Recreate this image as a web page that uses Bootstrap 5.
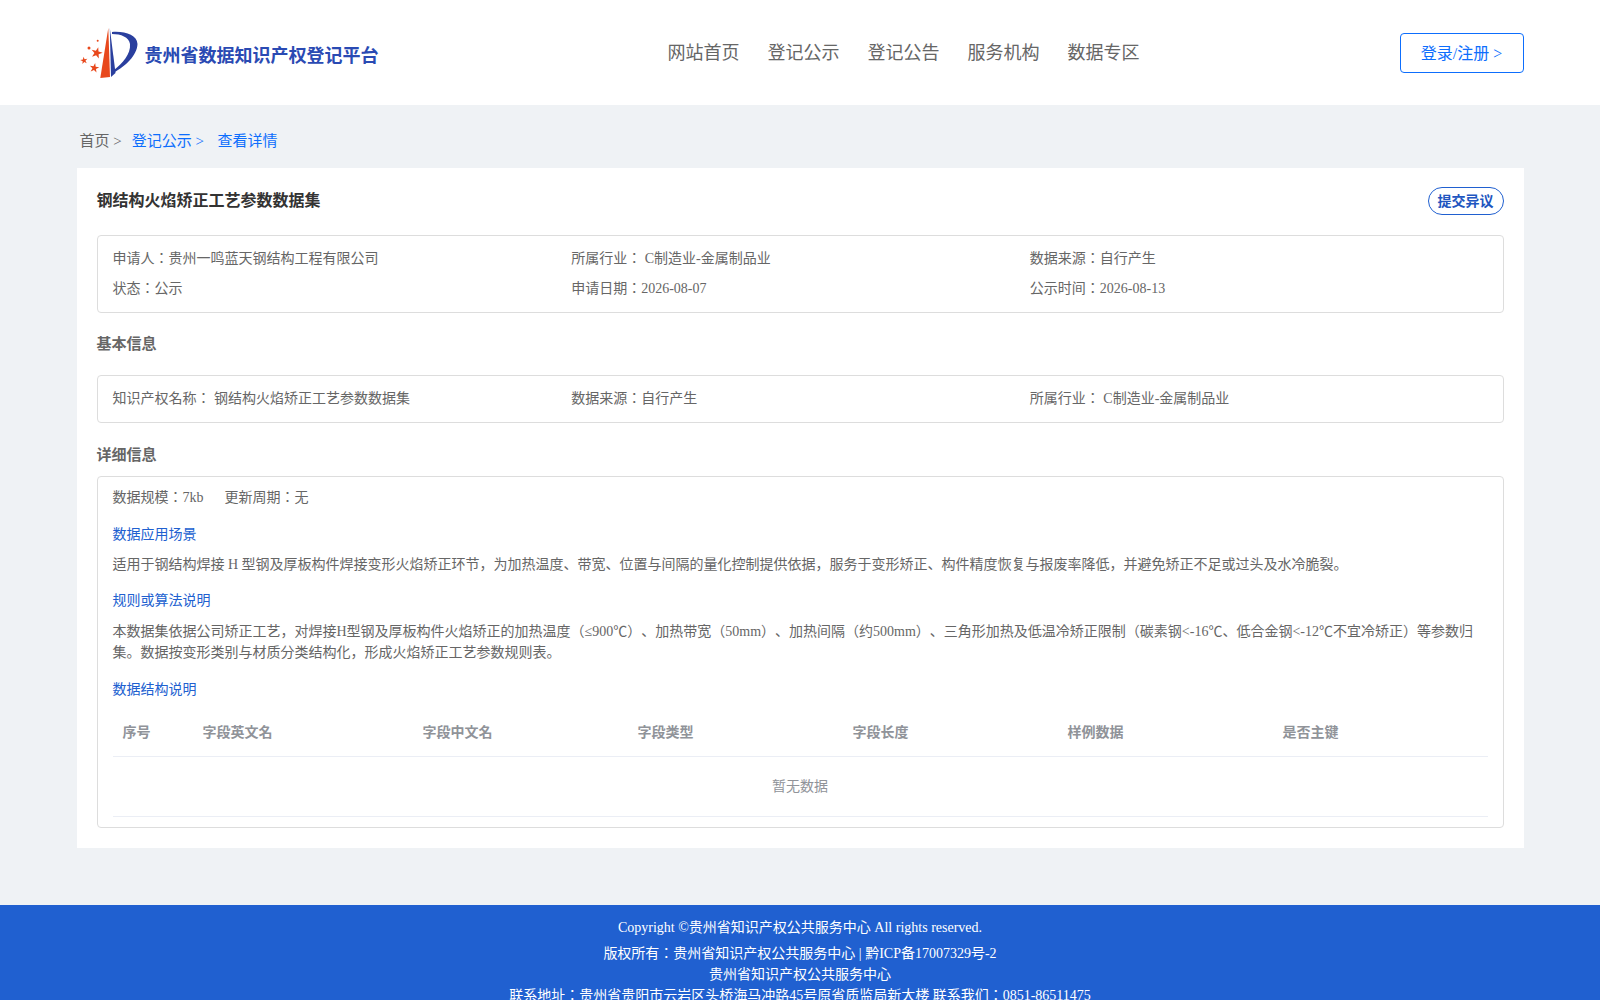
<!DOCTYPE html>
<html>
<head>
<meta charset="utf-8">
<title>钢结构火焰矫正工艺参数数据集</title>
<link rel="stylesheet" href="https://cdn.jsdelivr.net/npm/bootstrap@5.3.0/dist/css/bootstrap.min.css">
<style>
body{font-family:"Liberation Serif","Noto Sans CJK JP",serif;background:#eff2f5;color:#666;font-size:14px;height:1000px;overflow:hidden;text-spacing-trim:space-all}
.wrap-x{width:1447px;margin:0 auto}
.top-bar{background:#fff;height:105px}
.top-bar .wrap-x{height:100%}
.brand-name{font-size:18px;font-weight:700;color:#2a4ab3;margin-top:7px}
.brand-box{width:550px}
.brand-box svg{margin-left:-2px}
.menu-x{gap:28px;font-size:18px;color:#666;padding-left:41px;margin-top:2px}
.login-x{width:124px;height:40px;border:1px solid #0d6efd;border-radius:4px;color:#0d6efd;font-size:16px;padding-top:2px}
.crumb-x{font-size:15px;height:63px;padding-left:3px;padding-top:10px;color:#666}
.crumb-x a{color:#0d6efd;text-decoration:none}
.crumb-mid{margin:0 13.500px 0 10px}
.sheet{background:#fff;height:680px;padding:20px}
.title-row{height:26px}
.title-x{font-size:16px;font-weight:700;color:#333;height:24px;line-height:24px;margin-top:1px}
.dispute{border:1px solid #2060d0;border-radius:14px;height:28px;width:76px;color:#2055c0;font-weight:700;font-size:14px;margin-top:-1px}
.boxed{border:1px solid #ddd;border-radius:4px;padding:0 15px}
.info-1{margin-top:21px;height:78px;padding-top:8px}
.info-2{height:48px;padding-top:8px}
.cell-x{width:458.67px;height:30px;line-height:30px;flex:none;white-space:nowrap}
.sec-head{font-size:15px;font-weight:700;color:#666}
.sec-a{height:62px;line-height:63px}
.sec-b{height:53px;line-height:64px}
.detail{height:352px;padding-top:10px}
.meta-row{line-height:22px;height:22px;gap:21px}
.blue-sub{color:#2060d0;line-height:21px;margin-top:15px}
.para-x{line-height:21px;margin:9px 0 0}
.para-x.para-wide{margin-top:10px}
.blue-sub.blue-low{margin-top:16px}
.grid-x{width:100%;table-layout:fixed;margin-top:10px;border-collapse:collapse}
.grid-x th{font-weight:700;color:#909399;height:46px;padding:0 10px;border-bottom:1px solid #ebeef5}
.grid-x td{height:60px;text-align:center;color:#909399;border-bottom:1px solid #ebeef5}
.foot-x{background:#2060d0;color:#fff;margin-top:57px;height:95px;text-align:center;line-height:21px;padding-top:12px}
.foot-x p{margin:0}
.foot-x .first-line{margin-bottom:5px}
</style>
</head>
<body>
<header class="top-bar">
  <div class="wrap-x d-flex align-items-center">
    <div class="brand-box d-flex align-items-center">
      <svg width="70" height="65" viewBox="0 0 70 65" aria-hidden="true">
        <defs><polygon id="star5" points="0,-1 .225,-.309 .951,-.309 .363,.118 .588,.809 0,.382 -.588,.809 -.363,.118 -.951,-.309 -.225,-.309" fill="#e8481c"/></defs>
        <path d="M33.300 8 L35 57 L25.300 58Z" fill="#e8481c"/>
        <path d="M34.800 8 L36 57 L40.500 53Z" fill="#2a3f9e"/>
        <path d="M37 12 C50 11 62 15 62.500 24 C62 36 50 46 40 52 L39 50 C47 44 56 34 55 24 C54 17 46 14 37 14Z" fill="#2a3f9e"/>
        <use href="#star5" transform="translate(21.700 33) rotate(15) scale(6)"/>
        <use href="#star5" transform="translate(9 40.500) rotate(-10) scale(3.800)"/>
        <use href="#star5" transform="translate(19.300 48) rotate(10) scale(5)"/>
        <circle cx="14" cy="28" r="1.500" fill="#e8481c"/>
        <circle cx="22.700" cy="20.700" r="1" fill="#e8481c"/>
      </svg>
      <span class="brand-name">贵州省数据知识产权登记平台</span>
    </div>
    <nav class="menu-x d-flex flex-grow-1">
      <span>网站首页</span><span>登记公示</span><span>登记公告</span><span>服务机构</span><span>数据专区</span>
    </nav>
    <div class="login-x d-flex align-items-center justify-content-center">登录/注册 &gt;</div>
  </div>
</header>
<main class="wrap-x">
  <div class="crumb-x d-flex align-items-center">
    <span>首页 &gt;</span><a href="#" class="crumb-mid">登记公示 &gt;</a><a href="#">查看详情</a>
  </div>
  <section class="sheet">
    <div class="title-row d-flex justify-content-between align-items-start">
      <div class="title-x">钢结构火焰矫正工艺参数数据集</div>
      <div class="dispute d-flex align-items-center justify-content-center">提交异议</div>
    </div>
    <div class="boxed info-1">
      <div class="d-flex">
        <div class="cell-x">申请人：贵州一鸣蓝天钢结构工程有限公司</div>
        <div class="cell-x">所属行业： C制造业-金属制品业</div>
        <div class="cell-x">数据来源：自行产生</div>
      </div>
      <div class="d-flex">
        <div class="cell-x">状态：公示</div>
        <div class="cell-x">申请日期：2026-08-07</div>
        <div class="cell-x">公示时间：2026-08-13</div>
      </div>
    </div>
    <div class="sec-head sec-a">基本信息</div>
    <div class="boxed info-2">
      <div class="d-flex">
        <div class="cell-x">知识产权名称： 钢结构火焰矫正工艺参数数据集</div>
        <div class="cell-x">数据来源：自行产生</div>
        <div class="cell-x">所属行业： C制造业-金属制品业</div>
      </div>
    </div>
    <div class="sec-head sec-b">详细信息</div>
    <div class="boxed detail">
      <div class="meta-row d-flex"><span>数据规模：7kb</span><span>更新周期：无</span></div>
      <div class="blue-sub">数据应用场景</div>
      <p class="para-x">适用于钢结构焊接 H 型钢及厚板构件焊接变形火焰矫正环节，为加热温度、带宽、位置与间隔的量化控制提供依据，服务于变形矫正、构件精度恢复与报废率降低，并避免矫正不足或过头及水冷脆裂。</p>
      <div class="blue-sub">规则或算法说明</div>
      <p class="para-x para-wide">本数据集依据公司矫正工艺，对焊接H型钢及厚板构件火焰矫正的加热温度（≤900℃）、加热带宽（50mm）、加热间隔（约500mm）、三角形加热及低温冷矫正限制（碳素钢&lt;-16℃、低合金钢&lt;-12℃不宜冷矫正）等参数归集。数据按变形类别与材质分类结构化，形成火焰矫正工艺参数规则表。</p>
      <div class="blue-sub blue-low">数据结构说明</div>
      <table class="grid-x">
        <colgroup><col style="width:80px"><col style="width:220px"><col style="width:215px"><col style="width:215px"><col style="width:215px"><col style="width:215px"><col></colgroup>
        <thead><tr><th>序号</th><th>字段英文名</th><th>字段中文名</th><th>字段类型</th><th>字段长度</th><th>样例数据</th><th>是否主键</th></tr></thead>
        <tbody><tr><td colspan="7">暂无数据</td></tr></tbody>
      </table>
    </div>
  </section>
</main>
<footer class="foot-x">
  <p class="first-line">Copyright ©贵州省知识产权公共服务中心 All rights reserved.</p>
  <p>版权所有：贵州省知识产权公共服务中心 | 黔ICP备17007329号-2</p>
  <p>贵州省知识产权公共服务中心</p>
  <p>联系地址：贵州省贵阳市云岩区头桥海马冲路45号原省质监局新大楼 联系我们：0851-86511475</p>
</footer>
<script src="https://cdn.jsdelivr.net/npm/bootstrap@5.3.0/dist/js/bootstrap.bundle.min.js"></script>
</body>
</html>
